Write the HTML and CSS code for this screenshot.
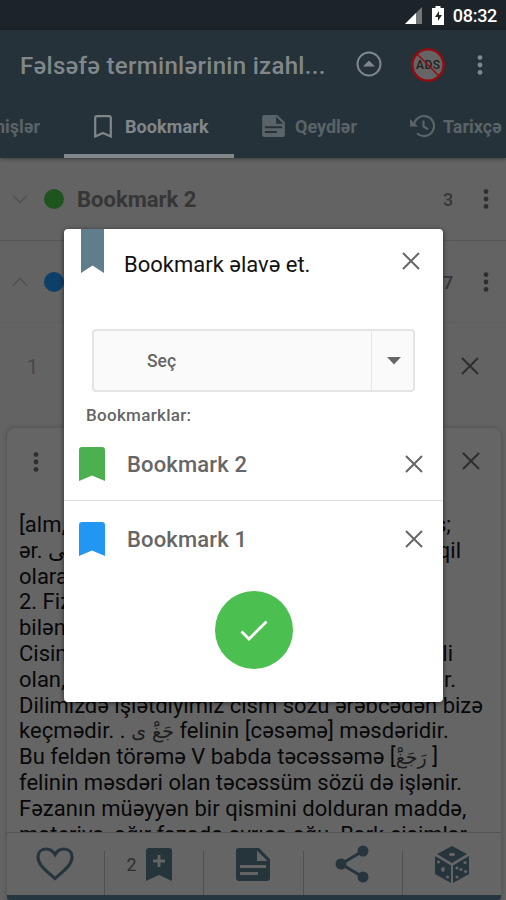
FILE: index.html
```html
<!DOCTYPE html>
<html lang="az">
<head>
<meta charset="utf-8">
<title>Bookmark</title>
<link rel="stylesheet" href="styles.css">
</head>
<body>
<svg class="defs" width="0" height="0">
  <symbol id="close" viewBox="0 0 18 18"><path d="M1 1 17 17M17 1 1 17" fill="none" stroke="currentColor" stroke-width="2"/></symbol>
  <symbol id="dots" viewBox="0 0 6 20"><circle cx="3" cy="2.6" r="2.4"/><circle cx="3" cy="10" r="2.4"/><circle cx="3" cy="17.4" r="2.4"/></symbol>
  <symbol id="flag" viewBox="0 0 26 34"><path d="M0 34V3Q0 0 3 0H23Q26 0 26 3V34L13 28.5Z"/></symbol>
  <symbol id="note" viewBox="0 0 34 33"><path fill-rule="evenodd" d="M3 0H23L34 11V30Q34 33 31 33H3Q0 33 0 30V3Q0 0 3 0ZM21 2.5V13H31.500ZM4 17V20H30V17ZM4 24V27H22V24Z"/></symbol>
</svg>
<div class="screen">
  <header class="status">
    <svg width="18" height="17" viewBox="0 0 18 17"><path d="M17 0V17H0Z" fill="#737779"/><path d="M11 6V17H0Z" fill="#fff"/></svg>
    <svg width="12" height="19" viewBox="0 0 12 19"><path d="M3.500 0h5v2H12v17H0V2h3.500Z" fill="#fff"/><path d="M7 5 3 11h3v4l4-6H7Z" fill="#1c2429"/></svg>
    <span>08:32</span>
  </header>
  <div class="appbar">
    <div class="titlebar">
      <h1>Fəlsəfə terminlərinin izahl...</h1>
      <svg class="up" width="26" height="26" viewBox="0 0 26 26"><circle cx="13" cy="13" r="11.500" fill="none" stroke="#81878a" stroke-width="2"/><path d="M7 15.500 13 9.500 19 15.500Z" fill="#81878a"/></svg>
      <svg class="ads" width="34" height="34" viewBox="0 0 34 34"><circle cx="17" cy="17" r="15.600" fill="#656565" stroke="#940b10" stroke-width="2.400"/><text x="17" y="21" text-anchor="middle" textLength="24">ADS</text><path d="M6 6 28 28" stroke="#940b10" stroke-width="1.500"/></svg>
      <svg class="more" width="6" height="20" fill="#81878a"><use href="#dots"/></svg>
    </div>
    <nav class="tabs">
      <div class="tab first"><span>mişlər</span></div>
      <div class="tab active"><svg width="18" height="23" viewBox="0 0 18 23"><path d="M1.200 21.500V3Q1.200 1.200 3 1.200H15Q16.800 1.200 16.800 3V21.500L9 18Z" fill="none" stroke="#81878a" stroke-width="2.200"/></svg><span>Bookmark</span></div>
      <div class="tab notes"><svg width="23" height="22" fill="#5a6368"><use href="#note"/></svg><span>Qeydlər</span></div>
      <div class="tab history"><svg width="25" height="24" viewBox="0 0 25 24"><path d="M4 12A10 10 0 1 1 7 19.200M13.500 6.500V12.500L18 15.200" fill="none" stroke="#5a6368" stroke-width="2.200"/><path d="M0 5V12.500H8Z" fill="#5a6368"/></svg><span>Tarixçə</span></div>
    </nav>
  </div>
  <main>
    <section class="row">
      <svg class="chev" width="16" height="10" viewBox="0 0 16 10"><path d="M1 1.500 8 8.500 15 1.500"/></svg>
      <i class="dot green"></i><b>Bookmark 2</b><span class="count">3</span>
      <svg class="menu" width="6" height="20"><use href="#dots"/></svg>
    </section>
    <section class="row second">
      <svg class="chev" width="16" height="10" viewBox="0 0 16 10"><path d="M1 8.500 8 1.500 15 8.500"/></svg>
      <i class="dot blue"></i><span class="count">7</span>
      <svg class="menu" width="6" height="20"><use href="#dots"/></svg>
    </section>
    <section class="item"><span>1</span><svg width="18" height="18"><use href="#close"/></svg></section>
    <article class="card">
      <div class="cardhead"><svg class="menu" width="6" height="20"><use href="#dots"/></svg><svg width="18" height="18"><use href="#close"/></svg></div>
      <div class="text">
        <p class="split e1"><span>[alm,</span><span>s;</span></p>
        <p class="split e2"><span>ər. <bdi>نى</bdi></span><span>qil</span></p>
        <p>olara</p>
        <p>2. Fiz</p>
        <p>bilən</p>
        <p class="split e3"><span>Cisim</span><span>li</span></p>
        <p class="split e4"><span>olan,</span><span>r.</span></p>
        <p>Dilimizdə işlətdiyimiz cism sözü ərəbcədən bizə</p>
        <p class="wide">keçmədir. . <bdi class="ar">جَغَْ ی</bdi> felinin [cəsəmə] məsdəridir.</p>
        <p>Bu feldən törəmə V babda təcəssəmə [<bdi class="ar">رَجَغَْ</bdi> ]</p>
        <p>felinin məsdəri olan təcəssüm sözü də işlənir.</p>
        <p class="loose">Fəzanın müəyyən bir qismini dolduran maddə,</p>
        <p>materiya, ağır fəzada ayrıca ağu. Bərk cisimlər</p>
      </div>
      <footer class="actions">
        <div><svg width="38" height="34" viewBox="0 0 38 34"><path d="M19 31.500C9 23 2 17.500 2 10C2 5 5.500 2 10 2C14 2 17 4 19 7.500C21 4 24 2 28 2C32.500 2 36 5 36 10C36 17.500 29 23 19 31.500Z" fill="none" stroke="#26343c" stroke-width="3.200"/></svg></div>
        <div class="saved"><span>2</span><svg width="26" height="33" viewBox="0 0 26 33"><path d="M0 33V3Q0 0 3 0H23Q26 0 26 3V33L13 27Z" fill="#26343c"/><path d="M13 7V19M7 13H19" stroke="#656565" stroke-width="2.800"/></svg></div>
        <div class="mid"><svg width="34" height="33" fill="#26343c"><use href="#note"/></svg></div>
        <div><svg width="34" height="38" viewBox="0 0 34 38"><path d="M28 6 6 19 28 32" fill="none" stroke="#26343c" stroke-width="3"/><g fill="#26343c"><circle cx="28" cy="6" r="5.500"/><circle cx="6" cy="19" r="5.500"/><circle cx="28" cy="32" r="5.500"/></g></svg></div>
        <div class="mid"><svg width="34" height="37" viewBox="0 0 34 37"><path d="M17 0 32 8 17 17 2 8ZM0 10 16 19.500V37L0 28ZM34 10V28L18 37V19.500Z" fill="#26343c"/><g fill="#656565"><ellipse cx="17" cy="8.500" rx="3" ry="1.700"/><ellipse cx="8" cy="23.500" rx="1.800" ry="2.400"/><circle cx="3.500" cy="16" r="1.600"/><circle cx="12.500" cy="31" r="1.600"/><circle cx="22" cy="22" r="1.600"/><circle cx="30" cy="16.500" r="1.600"/><circle cx="26" cy="23.500" r="1.600"/><circle cx="22" cy="31" r="1.600"/><circle cx="30.500" cy="25.500" r="1.600"/></g></svg></div>
      </footer>
      <div class="base"></div>
    </article>
  </main>
  <div class="dialog">
    <div class="dhead"><svg class="ribbon" width="23" height="44" viewBox="0 0 23 44"><path d="M0 0H23V44L11.500 36.500 0 44Z" fill="#607d8b"/></svg><h2>Bookmark əlavə et.</h2><svg class="x" width="18" height="18"><use href="#close"/></svg></div>
    <div class="select"><span>Seç</span><div><svg width="14" height="8" viewBox="0 0 14 8"><path d="M0 0H14L7 7.500Z" fill="#666"/></svg></div></div>
    <div class="label">Bookmarklar:</div>
    <div class="mark top"><svg width="26" height="34" fill="#4caf50"><use href="#flag"/></svg><b>Bookmark 2</b><svg class="x" width="18" height="18"><use href="#close"/></svg></div>
    <div class="mark"><svg width="26" height="34" fill="#2196f3"><use href="#flag"/></svg><b>Bookmark 1</b><svg class="x" width="18" height="18"><use href="#close"/></svg></div>
    <div class="ok"><svg width="28" height="22" viewBox="0 0 28 22"><path d="M1.500 12.500 9 20 26.500 2.500" fill="none" stroke="#fff" stroke-width="2.800"/></svg></div>
  </div>
</div>
</body>
</html>
```
FILE: styles.css
```css
* { box-sizing: border-box; }
body { margin: 0; }
h1, h2, p { margin: 0; }
svg { display: block; flex: none; }
.defs { position: absolute; }
.screen { position: relative; width: 506px; height: 900px; overflow: hidden; display: flex; flex-direction: column; background: #636363; font-family: Roboto, "Noto Sans", "DejaVu Sans", sans-serif; white-space: nowrap; }
.status { height: 30px; background: #1c2429; display: flex; align-items: center; padding: 0 9px 0 405px; color: #fff; font-size: 18px; font-weight: 500; }
.status span { margin-left: auto; letter-spacing: -0.3px; padding-top: 1px; }
.status svg + svg { margin-left: 9px; }
.appbar { height: 128px; background: #263239; display: flex; flex-direction: column; box-shadow: 0 1px 4px #0006; }
.titlebar { height: 69px; display: flex; align-items: center; padding-left: 20px; }
h1 { width: 336px; font-size: 24px; font-weight: 500; color: #81878a; letter-spacing: 0.3px; padding-top: 2px; }
.up { margin-top: -1px; }
.ads { margin-left: 29px; }
.ads text { font: 500 12px Roboto, sans-serif; fill: #222; }
.more { margin-left: 32px; }
.tabs { flex: 1; display: flex; }
.tab { display: flex; align-items: center; color: #5a6368; font-size: 18px; font-weight: 700; padding-bottom: 5px; flex: none; }
.first { width: 64px; justify-content: flex-end; padding-right: 24px; overflow: hidden; }
.active { width: 170px; padding: 0 0 1px 30px; border-bottom: 4px solid #81878a; color: #81878a; }
.active span { margin-left: 13px; letter-spacing: .1px; }
.notes { width: 176px; padding-left: 28px; }
.notes span { margin-left: 10px; }
.history span { margin-left: 8px; }
main { flex: 1; display: flex; flex-direction: column; color: #2e2e2e; }
.menu { fill: #2e2e2e; }
.row { height: 83px; flex: none; border-bottom: 1px solid #565656; display: flex; align-items: center; padding: 0 17px 0 12px; }
.second { height: 82px; border-color: #5f5f5f; }
.chev { fill: none; stroke: #505050; stroke-width: 1.3; }
.dot { width: 20px; height: 20px; border-radius: 50%; margin: 0 13px 0 16px; }
.green { background: #1e541e; }
.blue { background: #0d3f68; }
.row b { font-size: 22px; color: #363636; padding-top: 1px; }
.count { margin-left: auto; font-size: 18px; font-weight: 500; width: 40px; color: #363636; padding-top: 1px; }
.item { height: 105px; flex: none; display: flex; justify-content: space-between; align-items: flex-start; padding: 34px 27px 0; color: #2e2e2e; }
.item span { font-size: 20px; color: #474747; margin-top: -2px; }
.card { flex: 1; width: 494px; margin-left: 7px; background: #656565; border-radius: 8px 8px 3px 3px; box-shadow: 0 0 4px #4b4b4b; overflow: hidden; display: flex; flex-direction: column; }
.cardhead { height: 84px; flex: none; display: flex; justify-content: space-between; padding: 24px 21px 0 26px; }
.text { height: 320px; flex: none; overflow: hidden; padding-left: 12px; color: #080808; font-size: 22px; line-height: 25.8px; }
.text p { height: 25.8px; }
.split { display: flex; justify-content: space-between; }
.e1 { width: 432px; } .e2 { width: 442px; } .e3 { width: 434px; } .e4 { width: 437px; }
.wide { letter-spacing: .06px; }
.loose { letter-spacing: .04px; }
.ar { font-family: "DejaVu Sans", sans-serif; font-size: 19px; color: #1c1c1c; }
.actions { height: 63px; flex: none; border-top: 1px solid #545454; display: grid; grid-template-columns: 97px 99px 100px 99px 99px; }
.actions div { display: flex; align-items: center; justify-content: center; position: relative; padding-right: 2px; }
.actions div + div::before { content: ""; position: absolute; left: 0; top: 18px; bottom: 0; width: 1px; background: #505050; }
.actions .saved { padding-right: 9px; }
.actions .mid { padding-right: 0; }
.saved span { font-size: 18px; color: #2e2e2e; margin-right: 9px; }
.base { flex: 1; background: #263640; }
.dialog { position: absolute; left: 64px; top: 229px; width: 379px; height: 473px; background: #fff; border-radius: 4px; box-shadow: 0 1px 5px #0009; color: #666; }
.dhead { height: 100px; display: flex; padding: 0 23px 0 17px; }
.ribbon { margin-right: 20px; }
h2 { font-size: 22px; font-weight: 400; color: #111; line-height: 28px; margin-top: 22px; }
.dhead .x { margin: 23px 0 0 auto; }
.select { height: 63px; margin: 0 28px; border: 2px solid #e4e4e4; border-radius: 4px; background: #fafafa; display: flex; align-items: center; justify-content: space-between; padding-left: 53px; font-size: 17.5px; font-weight: 500; }
.select div { width: 42px; height: 100%; border-left: 1px solid #e8e8e8; padding-left: 2px; display: flex; align-items: center; justify-content: center; }
.label { height: 43px; padding: 12px 0 0 22px; font-size: 17px; font-weight: 500; line-height: 22px; letter-spacing: .3px; }
.mark { height: 76px; display: flex; align-items: center; padding: 0 20px 0 15px; }
.top { height: 66px; padding-bottom: 8px; border-bottom: 1px solid #ddd; }
.mark b { margin-left: 22px; font-size: 22px; font-weight: 500; letter-spacing: .15px; padding-top: 1px; }
.mark .x { margin-left: auto; }
.ok { width: 78px; height: 78px; margin: 14px 0 0 151px; border-radius: 50%; background: #4bbf4f; display: flex; align-items: center; justify-content: center; }
```
